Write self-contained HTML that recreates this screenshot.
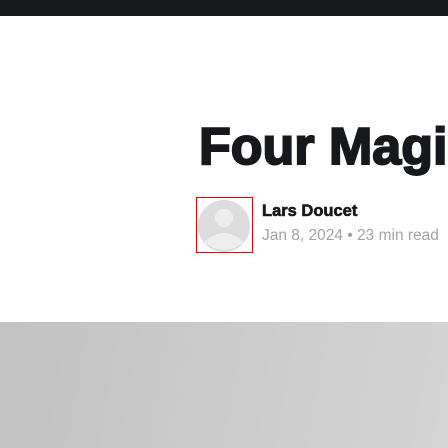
<!DOCTYPE html>
<html><head><style>
html,body{margin:0;padding:0;width:448px;height:448px;overflow:hidden;background:#fff;font-family:"Liberation Sans","DejaVu Sans",sans-serif;}
.bar{position:absolute;left:0;top:0;width:448px;height:16px;background:#17181c;}
h1{position:absolute;left:199px;top:117px;margin:0;font-size:52px;font-weight:700;color:#17181c;white-space:nowrap;line-height:60px;letter-spacing:0;-webkit-text-stroke:2px #17181c;}
.box{position:absolute;left:196px;top:197px;width:55px;height:54px;border:1px solid #e00;}
.name{position:absolute;left:262px;top:202px;font-size:16.5px;font-weight:700;color:#17181c;white-space:nowrap;-webkit-text-stroke:0.6px #17181c;}
.meta{position:absolute;left:262px;top:227px;font-size:15.5px;color:#a3a3a3;white-space:nowrap;}
.gray{position:absolute;left:0;top:322px;width:448px;height:126px;background:linear-gradient(100deg,#c2c2c2,#d4d4d4);}
</style></head><body>
<div class="bar"></div>
<h1>Four Magi</h1>
<div class="box"><svg width="55" height="54" viewBox="0 0 55 54">
<circle cx="27" cy="28" r="26" fill="#dcdcdc"/>
<circle cx="27" cy="20" r="9" fill="#eeeeee"/>
<path d="M7 44 Q27 26 47 44 Q27 60 7 44Z" fill="#eeeeee"/>
</svg></div>
<div class="name">Lars Doucet</div>
<div class="meta">Jan 8, 2024 • 23 min read</div>
<div class="gray"></div>
</body></html>
